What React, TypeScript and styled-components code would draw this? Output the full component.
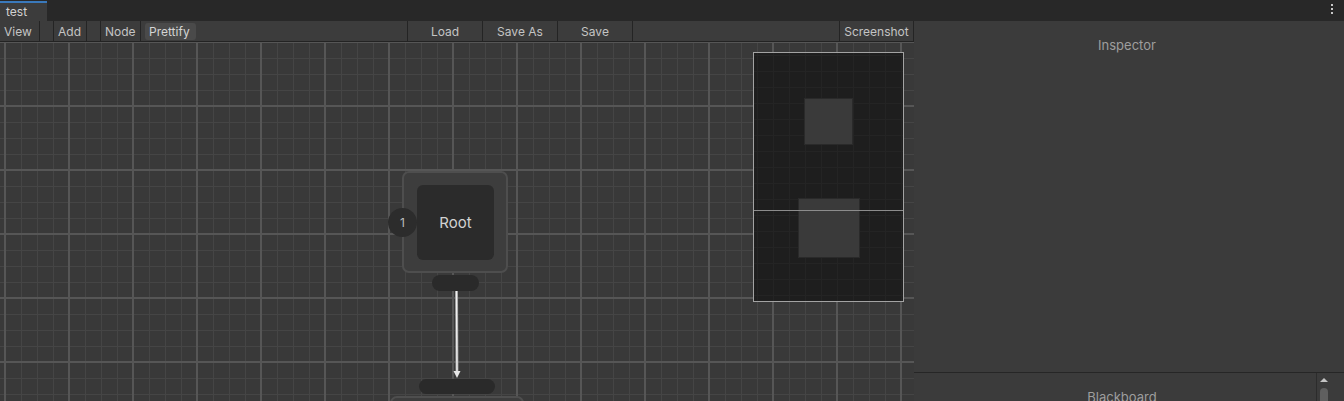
import React from 'react';
import styled, { createGlobalStyle } from 'styled-components';

const GlobalStyle = createGlobalStyle`
  html, body {
    margin: 0;
    padding: 0;
    background: #282828;
    overflow: hidden;
  }
  * { box-sizing: border-box; }
`;

const Window = styled.div`
  width: 1344px;
  height: 401px;
  display: flex;
  flex-direction: column;
  font-family: Inter, "Noto Sans", sans-serif;
  overflow: hidden;
`;

const TabBar = styled.div`
  height: 21px;
  background: #282828;
  display: flex;
  align-items: flex-end;
  justify-content: space-between;
  flex-shrink: 0;
`;

const Tab = styled.div`
  width: 47px;
  height: 20px;
  background: #3c3c3c;
  border-top: 2px solid #3a79bb;
  color: #d2d2d2;
  font-size: 12px;
  padding: 1px 0 0 6px;
`;

const Kebab = styled.div`
  display: flex;
  flex-direction: column;
  gap: 2px;
  align-self: flex-start;
  margin: 4px 11px 0 0;
  span {
    width: 2px;
    height: 2px;
    background: #c8c8c8;
  }
`;

const Body = styled.div`
  flex: 1;
  display: flex;
  min-height: 0;
`;

const EditorColumn = styled.div`
  width: 914px;
  display: flex;
  flex-direction: column;
`;

const Toolbar = styled.div`
  height: 21px;
  background: #3c3c3c;
  border-bottom: 1px solid #232323;
  display: flex;
  align-items: stretch;
  flex-shrink: 0;
`;

const ToolItem = styled.div<{ w: number; left?: boolean; right?: boolean; center?: boolean }>`
  width: ${p => p.w}px;
  border-left: ${p => (p.left ? '1px solid #242424' : 'none')};
  border-right: ${p => (p.right ? '1px solid #242424' : 'none')};
  color: #c4c4c4;
  font-size: 12px;
  display: flex;
  align-items: center;
  justify-content: ${p => (p.center ? 'center' : 'flex-start')};
  padding-left: ${p => (p.center ? 0 : 4)}px;
  flex-shrink: 0;
`;

const Gap = styled.div<{ w: number }>`
  width: ${p => p.w}px;
  flex-shrink: 0;
`;

const Spacer = styled.div<{ grow: number }>`
  flex: ${p => p.grow};
`;

const Prettify = styled.div`
  margin: 2px 0 1px 4px;
  width: 51px;
  background: #4a4a4a;
  border-radius: 3px;
  color: #d4d4d4;
  font-size: 12px;
  display: flex;
  align-items: center;
  padding-left: 4px;
`;

const Graph = styled.div`
  flex: 1;
  position: relative;
  overflow: hidden;
  background-color: #393939;
  background-image:
    linear-gradient(to right, #565656 2px, transparent 2px),
    linear-gradient(to bottom, #565656 2px, transparent 2px),
    linear-gradient(to right, #454545 1px, transparent 1px),
    linear-gradient(to bottom, #454545 1px, transparent 1px);
  background-size: 64px 64px, 64px 64px, 16px 16px, 16px 16px;
  background-position: 4px -1px, 4px -1px, 5px 0, 5px 0;
`;

const NodeBox = styled.div<{ x: number; y: number; w: number }>`
  position: absolute;
  left: ${p => p.x}px;
  top: ${p => p.y}px;
  width: ${p => p.w}px;
  display: flex;
  flex-direction: column;
  align-items: center;
`;

const NodeBody = styled.div<{ h: number }>`
  position: relative;
  width: 100%;
  height: ${p => p.h}px;
  background: #3d3d3d;
  border: 2px solid #4e4e4e;
  border-radius: 7px;
  display: flex;
  align-items: flex-start;
  justify-content: center;
  padding-top: 12px;
`;

const NodeInner = styled.div`
  width: 77px;
  height: 75px;
  margin-left: 1px;
  background: #2b2b2b;
  border-radius: 6px;
  color: #d2d2d2;
  font-size: 15px;
  display: flex;
  align-items: center;
  justify-content: center;
`;

const OrderBadge = styled.div`
  position: absolute;
  left: -16px;
  top: 35px;
  width: 29px;
  height: 29px;
  border-radius: 50%;
  background: #2c2c2c;
  color: #bdbdbd;
  font-size: 12px;
  display: flex;
  align-items: center;
  justify-content: center;
`;

const Port = styled.div<{ w: number; h: number }>`
  width: ${p => p.w}px;
  height: ${p => p.h}px;
  background: #2a2a2a;
  border-radius: 8px;
  margin: 2px 0;
`;

const EdgeSvg = styled.svg`
  position: absolute;
  left: 446px;
  top: 249px;
`;

const Minimap = styled.div`
  position: absolute;
  left: 753px;
  top: 10px;
  width: 151px;
  height: 250px;
  border: 1px solid #a3a3a3;
  background-color: #1e1e1e;
  background-image:
    linear-gradient(to right, #242424 1px, transparent 1px),
    linear-gradient(to bottom, #242424 1px, transparent 1px);
  background-size: 16px 16px;
  background-position: 3px 2px;
`;

const MiniNode = styled.div<{ x: number; y: number; w: number; h: number }>`
  position: absolute;
  left: ${p => p.x}px;
  top: ${p => p.y}px;
  width: ${p => p.w}px;
  height: ${p => p.h}px;
  background: #3a3a3a;
  border: 1px solid #2a2a2a;
`;

const MiniViewLine = styled.div`
  position: absolute;
  left: 0;
  right: 0;
  top: 157px;
  height: 1px;
  background: #8c8c8c;
`;

const Sidebar = styled.div`
  flex: 1;
  display: flex;
  flex-direction: column;
  background: #3b3b3b;
`;

const Inspector = styled.div`
  height: 352px;
  flex-shrink: 0;
  border-bottom: 1px solid #262626;
  text-align: center;
  padding: 16px 4px 0 0;
  color: #9e9e9e;
  font-size: 13px;
`;

const BlackboardRow = styled.div`
  flex: 1;
  min-height: 0;
  overflow: hidden;
  display: flex;
  padding-right: 14px;
`;

const BlackboardTitle = styled.div`
  flex: 1;
  text-align: center;
  padding: 16px 0 0 14px;
  color: #9e9e9e;
  font-size: 13px;
`;

const Scrollbar = styled.div`
  width: 14px;
  border-left: 1px solid #2c2c2c;
  display: flex;
  flex-direction: column;
  align-items: center;
  padding-top: 5px;
`;

const UpArrow = styled.div`
  width: 0;
  height: 0;
  border-left: 4px solid transparent;
  border-right: 4px solid transparent;
  border-bottom: 4px solid #c4c4c4;
  flex-shrink: 0;
`;

const Thumb = styled.div`
  margin-top: 6px;
  width: 8px;
  height: 40px;
  flex-shrink: 0;
  background: #5f5f5f;
  border-radius: 4px 4px 0 0;
`;

export default function App() {
  return (
    <>
      <GlobalStyle />
      <Window>
        <TabBar>
          <Tab>test</Tab>
          <Kebab>
            <span />
            <span />
            <span />
          </Kebab>
        </TabBar>
        <Body>
          <EditorColumn>
            <Toolbar>
              <ToolItem w={40} right>View</ToolItem>
              <Gap w={13} />
              <ToolItem w={34} left right>Add</ToolItem>
              <Gap w={13} />
              <ToolItem w={41} left right>Node</ToolItem>
              <Prettify>Prettify</Prettify>
              <Spacer grow={211} />
              <ToolItem w={75} left center>Load</ToolItem>
              <ToolItem w={75} left center>Save As</ToolItem>
              <ToolItem w={76} left right center>Save</ToolItem>
              <Spacer grow={206} />
              <ToolItem w={75} left right center>Screenshot</ToolItem>
            </Toolbar>
            <Graph>
              <EdgeSvg width="22" height="90" viewBox="0 0 22 90">
                <line x1="10.5" y1="0" x2="11" y2="83" stroke="#9a9a9a" strokeWidth="3" />
                <line x1="10.5" y1="0" x2="11" y2="83" stroke="#f0f0f0" strokeWidth="1.4" />
                <path d="M7.5 80 L14.5 80 L11 87 Z" fill="#e6e6e6" />
              </EdgeSvg>
              <NodeBox x={402} y={129} w={106}>
                <NodeBody h={102}>
                  <OrderBadge>1</OrderBadge>
                  <NodeInner>Root</NodeInner>
                </NodeBody>
                <Port w={47} h={16} />
              </NodeBox>
              <NodeBox x={390} y={335} w={134}>
                <Port w={76} h={15} />
                <NodeBody h={80} />
              </NodeBox>
              <Minimap>
                <MiniNode x={50} y={45} w={49} h={47} />
                <MiniNode x={44} y={145} w={62} h={60} />
                <MiniViewLine />
              </Minimap>
            </Graph>
          </EditorColumn>
          <Sidebar>
            <Inspector>Inspector</Inspector>
            <BlackboardRow>
              <BlackboardTitle>Blackboard</BlackboardTitle>
              <Scrollbar>
                <UpArrow />
                <Thumb />
              </Scrollbar>
            </BlackboardRow>
          </Sidebar>
        </Body>
      </Window>
    </>
  );
}
